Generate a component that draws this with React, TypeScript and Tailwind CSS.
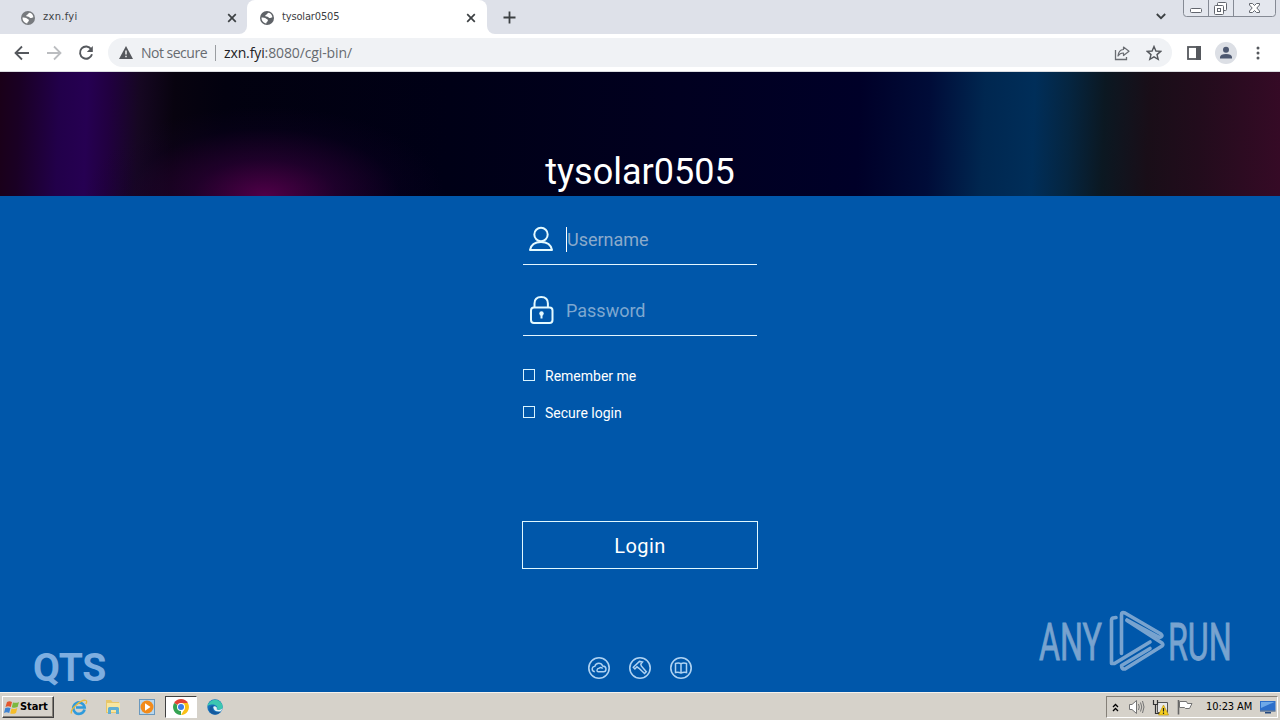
import React from 'react';

const ui = "font-['DejaVu_Sans',sans-serif] [font-stretch:condensed]";
const omni = "font-['Open_Sans',sans-serif]";

function Globe({ color }: { color: string }) {
  return (
    <svg width="14" height="14" viewBox="0 0 14 14" className="shrink-0">
      <circle cx="7" cy="7" r="7" fill={color} />
      <path d="M8.6 1.7C6.9 2.2 7.4 3.3 6.2 3.7 5.2 4 5 4.9 5.8 5.4 7 5.9 8.1 5.3 8.6 6.4 9 7.3 10.3 7.2 11 6.8L12.4 6.3C12.2 3.9 10.7 2.2 8.6 1.7Z" fill="#fff" />
      <path d="M1.5 6.6C3 6.8 5.2 6.6 6 7.6 6.6 8.6 8 8.2 7.9 9.4 7.8 10.5 6.4 10.4 6.3 12.4 3.6 12.2 1.4 9.8 1.5 6.6Z" fill="#fff" />
    </svg>
  );
}

function Cross() {
  return (
    <svg width="10" height="10" viewBox="0 0 10 10" className="shrink-0">
      <path d="M1.2 1.2 8.8 8.8M8.8 1.2 1.2 8.8" stroke="#3c4043" strokeWidth="1.7" />
    </svg>
  );
}

function TabStrip() {
  return (
    <div className={`flex h-[34px] bg-white text-[11px] text-[#3c4043] ${ui}`}>
      <div className="flex w-[247px] items-center rounded-br-lg bg-[#dee1e9] pt-px pl-[21px] pr-[10px]">
        <Globe color="#777a7e" />
        <span className="ml-2 flex-1 tracking-[0.3px]">zxn.fyi</span>
        <Cross />
      </div>
      <div className="w-[240px] bg-[#dee1e9] [clip-path:inset(0)]">
        <div className="flex h-full items-center rounded-t-lg bg-white pt-px pl-[13px] pr-[11px]">
          <Globe color="#5f6368" />
          <span className="ml-2 flex-1 tracking-[-0.15px]">tysolar0505</span>
          <Cross />
        </div>
      </div>
      <div className="flex flex-1 rounded-bl-lg bg-[#dee1e9]">
        <div className="flex flex-1 items-center pl-[16px]">
          <svg width="13" height="13" viewBox="0 0 13 13">
            <path d="M6.5 .5V12.5M.5 6.5H12.5" stroke="#3c4043" strokeWidth="1.8" />
          </svg>
        </div>
        <svg width="10" height="7" viewBox="0 0 10 7" className="mr-[17px] mt-[13px]">
          <path d="M.8 1 5 5.2 9.2 1" fill="none" stroke="#3c4043" strokeWidth="1.8" />
        </svg>
        {/* Window buttons */}
        <svg width="93" height="18" viewBox="0 0 93 18" className="mr-1">
          <path d="M.5 0V13.5Q.5 16.5 3.5 16.5H89.5Q92.5 16.5 92.5 13.5V0M25.5 0V16M50.5 0V16" fill="#e4e7ee" stroke="#858a94" />
          <rect x="7.5" y="8.5" width="11" height="4" rx="1" fill="#fff" stroke="#62666e" />
          <rect x="34.5" y="2.5" width="9" height="8" rx="1" fill="#fff" stroke="#62666e" />
          <rect x="31.5" y="5.5" width="9" height="9" rx="1" fill="#fff" stroke="#62666e" />
          <rect x="34.5" y="8.5" width="3" height="3" fill="none" stroke="#62666e" />
          <path d="M66.5 3.5H69.5L71.5 5.5 73.5 3.5H76.5V5L73.8 8 76.5 11V12.5H73.5L71.5 10.5 69.5 12.5H66.5V11L69.2 8 66.5 5Z" fill="#fff" stroke="#62666e" />
        </svg>
      </div>
    </div>
  );
}

function Toolbar() {
  return (
    <div className="flex h-[38px] items-center border-b border-[#dadce0] bg-white pl-[14px]">
      <svg width="16" height="16" viewBox="0 0 16 16">
        <path d="M15 8H2M8 1.5 1.5 8 8 14.5" fill="none" stroke="#55585d" strokeWidth="1.8" />
      </svg>
      <svg width="16" height="16" viewBox="0 0 16 16" className="ml-4">
        <path d="M1 8H14M8 1.5 14.5 8 8 14.5" fill="none" stroke="#bbbdc0" strokeWidth="1.8" />
      </svg>
      <svg width="16" height="16" viewBox="0 0 16 16" className="ml-4">
        <path d="M13.2 4.2A6.1 6.1 0 1 0 14 9.3" fill="none" stroke="#55585d" strokeWidth="1.9" />
        <path d="M14.8 1V7H8.8Z" fill="#55585d" />
      </svg>
      {/* Address bar */}
      <div className={`ml-[14px] flex h-[29px] w-[1064px] items-center rounded-full bg-[#f0f2f5] pl-[11px] pr-[10px] text-[14px] ${omni}`}>
        <svg width="14" height="13" viewBox="0 0 14 13">
          <path d="M7 0 14 13H0Z" fill="#55585d" />
          <path d="M7 4.5V8.5M7 9.8V11.3" stroke="#fff" strokeWidth="1.4" />
        </svg>
        <span className="ml-2 w-[67px] whitespace-nowrap tracking-[-0.5px] text-[#676b70]">Not secure</span>
        <span className="ml-[7px] h-4 w-px bg-[#9a9da1]" />
        <span className="ml-2 flex-1 tracking-[-0.12px] text-[#676b70]">
          <span className="text-[#202124]">zxn.fyi</span>:8080/cgi-bin/
        </span>
        <svg width="16" height="16" viewBox="0 0 16 16" className="mr-4">
          <path d="M1.5 5V14.5H12.5V12" fill="none" stroke="#6a6d72" strokeWidth="1.3" />
          <path d="M9.5 2 15 6.2 9.5 10.5V8Q6 7.8 4 11 4.5 4.9 9.5 4.5Z" fill="none" stroke="#6a6d72" strokeWidth="1.2" strokeLinejoin="round" />
        </svg>
        <svg width="16" height="16" viewBox="0 0 16 16">
          <path d="M8 1.5 9.9 6 14.7 6.4 11 9.6 12.2 14.3 8 11.8 3.8 14.3 5 9.6 1.3 6.4 6.1 6Z" fill="none" stroke="#55585d" strokeWidth="1.4" />
        </svg>
      </div>
      <svg width="14" height="14" viewBox="0 0 14 14" className="ml-[15px]">
        <rect x="1" y="1" width="12" height="12" fill="none" stroke="#55585d" strokeWidth="1.8" />
        <path d="M9 0H14V14H9Z" fill="#55585d" />
      </svg>
      <svg width="22" height="22" viewBox="0 0 22 22" className="ml-[14px]">
        <circle cx="11" cy="11" r="11" fill="#dcdfe5" />
        <circle cx="11" cy="7.8" r="3" fill="#4d5870" />
        <path d="M5 16.5V15Q5.500 12 11 12T17 15V16.5Z" fill="#4d5870" />
      </svg>
      <svg width="4" height="16" viewBox="0 0 4 16" className="ml-[19px]">
        <circle cx="2" cy="3" r="1.5" fill="#55585d" />
        <circle cx="2" cy="8" r="1.5" fill="#55585d" />
        <circle cx="2" cy="13" r="1.5" fill="#55585d" />
      </svg>
    </div>
  );
}

function Banner() {
  return (
    <div className="flex h-[124px] items-end justify-center bg-[radial-gradient(180px_90px_at_265px_100%,#500048_0%,#38004088_40%,#16002c33_75%,transparent_100%),linear-gradient(92deg,#1a0018_0px,#1a0024_20px,#22004a_60px,#260052_88px,#210040_110px,#160722_140px,#08030f_175px,#02010f_225px,#000016_450px,#010020_680px,#000028_860px,#000c38_930px,#002750_985px,#002e59_1035px,#052540_1070px,#0b1822_1105px,#190e18_1150px,#220c1c_1200px,#360a26_1285px)]">
      <h1 className="font-[Roboto,sans-serif] text-[36px] leading-[48px] text-white">tysolar0505</h1>
    </div>
  );
}

function Option({ label }: { label: string }) {
  return (
    <label className="flex h-[37px] items-center text-[14px] text-white">
      <span className="mr-[10px] mb-[1px] ml-px size-3 border border-[#d8f4ff]" />
      <span className="pt-px">{label}</span>
    </label>
  );
}

function LoginForm() {
  return (
    <main className="flex h-[496px] flex-col bg-[#0057aa] font-[Roboto,sans-serif]">
      <div className="mx-auto w-[236px]">
        <div className="mx-px flex h-[69px] items-center border-b border-[#e4f6ff] pt-[18px]">
          <svg width="26" height="26" viewBox="0 0 26 26" className="mb-[1px] ml-[5px]">
            <circle cx="13" cy="8.5" r="6.7" fill="none" stroke="#e4faff" strokeWidth="2" />
            <path d="M2 24Q3.5 16 13 16T24 24Z" fill="none" stroke="#e4faff" strokeWidth="2" strokeLinejoin="round" />
          </svg>
          <span className="ml-3 h-[25px] w-px bg-white" />
          <span className="text-[18px] text-[#8baacb]">Username</span>
        </div>
        <div className="mx-px flex h-[71px] items-center border-b border-[#e4f6ff] pt-5">
          <svg width="26" height="30" viewBox="0 0 26 30" className="ml-[5px]">
            <path d="M6.5 12V8.5Q6.5 2 13.2 2T19.9 8.5V12" fill="none" stroke="#e4faff" strokeWidth="2" />
            <rect x="3" y="12.5" width="21.5" height="15.5" rx="3" fill="none" stroke="#e4faff" strokeWidth="2" />
            <circle cx="13.5" cy="18.5" r="2.2" fill="#e4faff" />
            <path d="M12.5 19H14.5V23.5H12.5Z" fill="#e4faff" />
          </svg>
          <span className="ml-3 text-[18px] text-[#7ea8d0]">Password</span>
        </div>
        <div className="mt-[21px]">
          <Option label="Remember me" />
          <Option label="Secure login" />
        </div>
        <button className="mt-[90px] flex h-12 w-full items-center justify-center border border-[#e0f8ff] pt-[2px] text-[20px] tracking-[0.4px] text-white">
          Login
        </button>
      </div>
      <div className="mt-auto flex items-end justify-between pr-8 pb-[5px] pl-8">
        <div className="w-[210px] pl-px text-[39px] leading-[38px] font-bold tracking-[-0.4px] text-[#7eaee0]">QTS</div>
        <div className="mb-2 flex gap-[19px]">
          <svg width="22" height="22" viewBox="0 0 22 22" fill="none" stroke="#aed2f2" strokeWidth="1.6">
            <circle cx="11" cy="11" r="10.2" />
            <path d="M6.8 14.8Q4 14.3 4.2 11.7 4.5 9.5 6.8 9.4 7.6 6.3 10.8 6.3 13.6 6.3 14.7 9 18 9.2 18 12T15.5 14.8H10.5Q8.8 14.6 9 13 9.3 11.3 11 11.2 13 9.8 14.7 11.5" strokeWidth="1.4" />
          </svg>
          <svg width="22" height="22" viewBox="0 0 22 22" fill="none" stroke="#aed2f2" strokeWidth="1.6">
            <circle cx="11" cy="11" r="10.2" />
            <path d="M4.3 10.3 10.5 4.4 13.5 5 11.8 7.1 12.3 9 17.3 14.7 15.5 16.5 10 11.3 8 9.8 5.9 12Z" strokeWidth="1.5" />
          </svg>
          <svg width="22" height="22" viewBox="0 0 22 22" fill="none" stroke="#aed2f2" strokeWidth="1.6">
            <circle cx="11" cy="11" r="10.2" />
            <path d="M5.5 6.5Q8.5 5.5 11 6.7 13.5 5.5 16.5 6.5V15.5Q13.5 14.8 11 16 8.5 14.8 5.5 15.5ZM11 6.7V16" strokeWidth="1.5" />
          </svg>
        </div>
        <svg width="210" height="70" viewBox="0 0 210 70" className="mb-2 overflow-visible font-[Roboto,sans-serif] text-[52px]" fill="#78a3cf">
          <text transform="translate(1 50.5) scale(.62 1)" stroke="#78a3cf" strokeWidth=".9">ANY</text>
          <text transform="translate(130 50.5) scale(.62 1)" stroke="#78a3cf" strokeWidth=".9">RUN</text>
          <g fill="none" stroke="#78a3cf" strokeWidth="3.6" strokeLinecap="round" strokeLinejoin="round">
            <path d="M78 8.500 75 9Q73.500 9.500 73.500 11.500V54.500L76.500 54.500 112 33" />
            <path d="M83.500 44.500V5.500Q83.500 2.500 87 4L123 25Q125.500 27.500 121.500 28.500L89 11" />
            <path d="M89 11.500 124 34Q125.500 35.500 124 37L87 60Q83.500 60.500 83.500 56.500L112 39.500" />
          </g>
        </svg>
      </div>
    </main>
  );
}

function Taskbar() {
  return (
    <footer className={`flex h-7 items-center border-t border-[#f4f2ee] bg-[#d6d2ca] pt-px pl-0.5 pr-0.5 text-[11px] text-black ${ui}`}>
      <button className="flex h-[22px] w-[52px] items-center border border-t-white border-r-[#404040] border-b-[#404040] border-l-white pl-px font-bold tracking-[-0.1px] shadow-[inset_-1px_-1px_#858078]">
        <svg width="16" height="15" viewBox="0 0 16 15" className="shrink-0">
          <path d="M3 2Q5.5 .5 8 2L6.8 7Q4 5.7 1.5 7Z" fill="#e4572c" />
          <path d="M9 2.4Q12 3.5 15 2L13.6 7Q10.5 8.5 7.8 7.3Z" fill="#7cb83e" />
          <path d="M1.3 8Q4 6.8 6.5 8.1L5.2 13Q2.5 11.7 0 13Z" fill="#3e83d2" />
          <path d="M7.5 8.5Q10.5 9.6 13.3 8.1L12 13Q9 14.5 6.2 13.4Z" fill="#f5bd28" />
        </svg>
        Start
      </button>
      {/* Quick launch */}
      <svg width="18" height="18" viewBox="0 0 18 18" className="ml-4">
        <path d="M14.5 11.5A5.7 5.7 0 1 1 14.6 9.5H6" fill="none" stroke="#2f9bdc" strokeWidth="2.7" />
        <path d="M1.5 15.5C-.5 11 12 .8 16 2.5 17.2 3.1 16.5 5 15.8 6" fill="none" stroke="#e8b93b" strokeWidth="1.3" />
      </svg>
      <svg width="18" height="18" viewBox="0 0 18 18" className="ml-4">
        <path d="M2 2H7L8.5 4H15V15H2Z" fill="#e8c76a" />
        <path d="M3 5H16V14H3Z" fill="#f8e6a0" />
        <path d="M4 16V10.5Q4 9 5.5 9H13.5Q15 9 15 10.5V16H12V12H7V16Z" fill="#61afd3" />
      </svg>
      <svg width="16" height="16" viewBox="0 0 16 16" className="ml-[17px]">
        <rect x=".5" y=".5" width="15" height="15" fill="#b8d7ee" stroke="#6a98bd" />
        <circle cx="8" cy="8" r="6.5" fill="#f28b1b" />
        <path d="M6 4.2 11.5 8 6 11.8Z" fill="#fff" />
      </svg>
      <div className="ml-[10px] flex h-[22px] w-8 items-center justify-center border border-t-[#404040] border-r-white border-b-white border-l-[#404040] bg-white">
        <svg width="16" height="16" viewBox="0 0 16 16">
          <path d="M8 8 1.1 4A8 8 0 0 1 14.9 4Z" fill="#e24335" />
          <path d="M8 8V16A8 8 0 0 1 1.1 4Z" fill="#35a352" />
          <path d="M8 8V4H14.9A8 8 0 0 1 8 16L11.5 10Z" fill="#fbc116" />
          <circle cx="8" cy="8" r="4" fill="#fff" />
          <circle cx="8" cy="8" r="3" fill="#3b7de8" />
        </svg>
      </div>
      <svg width="16" height="16" viewBox="0 0 16 16" className="ml-[10px]">
        <circle cx="8" cy="8" r="7.7" fill="#1673bd" />
        <path d="M.5 7A7.7 7.7 0 0 1 15.7 7.5C16 10.5 12 11.5 10 10.2 11.5 7.2 7 3.5 .5 7Z" fill="#3cc7b1" />
        <path d="M5.7 8.5C5 12 9 14.5 13.5 12.5 11 17 4 16 2.5 12 1.5 8 4.5 6 7.5 6.5 6.5 6.8 5.9 7.5 5.7 8.5Z" fill="#155a9e" />
        <path d="M6.2 8Q7.5 6.2 9.6 8.2 10.3 9.2 9.6 10.2 12 12 15.5 9.6L14 12.3Q7 13.5 6.2 8Z" fill="#e6f4f5" />
      </svg>
      {/* Notification area */}
      <div className="ml-auto flex h-[22px] w-[172px] items-center border border-t-[#858078] border-r-white border-b-white border-l-[#858078] pl-[5px]">
        <svg width="7" height="9" viewBox="0 0 7 9" className="shrink-0" fill="none" stroke="#000" strokeWidth="1.3">
          <path d="M1 4 3.5 1.5 6 4M1 8 3.5 5.5 6 8" />
        </svg>
        <svg width="17" height="16" viewBox="0 0 17 16" className="ml-[9px] shrink-0" fill="none" stroke="#737373">
          <path d="M1.5 5.5H4L8.5 1.5V14.5L4 10.5H1.5Z" fill="#fff" />
          <path d="M10.5 5Q12 8 10.5 11M12.5 3.5Q15 8 12.5 12.5M14.5 2Q17.5 8 14.5 14" />
        </svg>
        <svg width="17" height="17" viewBox="0 0 17 17" className="ml-[7px] shrink-0">
          <path d="M5.5 3.5H15.5V13.5H5.5Z" fill="#e8e8e8" stroke="#555" />
          <path d="M1.5 1V5.5H5.5V1M3.5 5.5V14.5H8" fill="none" stroke="#333" strokeWidth="1.2" />
          <path d="M11.5 6 16.5 16H6.5Z" fill="#f7d020" stroke="#b48a00" strokeWidth=".6" />
          <path d="M11.5 9V12.5M11.5 13.5V15" stroke="#222" strokeWidth="1.2" />
        </svg>
        <svg width="17" height="16" viewBox="0 0 17 16" className="ml-[7px] shrink-0">
          <path d="M2.5 1V15.5" stroke="#666" strokeWidth="1.6" />
          <path d="M3.5 2.5H10.5L11.5 4.5H16L13.5 9.5H9.5L8.5 8.5H3.5Z" fill="#fff" stroke="#737373" />
        </svg>
        <span className="ml-[13px] w-[48px] tracking-[-0.1px] whitespace-nowrap">10:23 AM</span>
        <svg width="16" height="14" viewBox="0 0 16 14" className="ml-[6px] shrink-0">
          <path d="M0 1H15.5V10.5H0Z" fill="#2d6fca" />
          <path d="M1 2H14.5L1 8Z" fill="#6fa9e8" />
          <path d="M0 10.5H15.5V11.5H0ZM5 12H11V13.5H5Z" fill="#244a80" />
        </svg>
      </div>
    </footer>
  );
}

export default function App() {
  return (
    <div className="flex h-[720px] w-[1280px] flex-col overflow-hidden">
      <TabStrip />
      <Toolbar />
      <Banner />
      <LoginForm />
      <Taskbar />
    </div>
  );
}
